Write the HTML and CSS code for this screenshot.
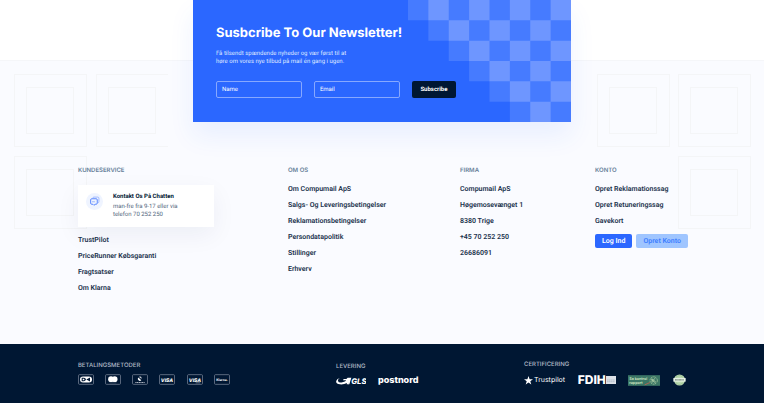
FILE: index.html
```html
<!DOCTYPE html>
<html lang="da">
<head>
<meta charset="utf-8">
<meta name="viewport" content="width=device-width, initial-scale=1">
<title>Compumail</title>
<link rel="stylesheet" href="styles.css">
</head>
<body>
<footer class="footer">
  <svg class="squares squares-left" viewBox="0 0 154 155" aria-hidden="true">
    <g id="square"><rect x=".5" y=".5" width="72" height="72"/><rect x="12.500" y="13.500" width="47" height="46"/></g>
    <use href="#square" x="82"/><use href="#square" y="82"/>
  </svg>
  <svg class="squares squares-right" viewBox="0 0 154 155" aria-hidden="true">
    <use href="#square"/><use href="#square" x="81"/><use href="#square" x="81" y="82"/>
  </svg>

  <section class="newsletter">
    <svg class="checker" viewBox="0 0 8 6" preserveAspectRatio="none" aria-hidden="true">
      <path class="checker-base" d="M0 0H8V6H5V5H4V4H3V3H2V2H1V1H0Z"/>
      <path class="checker-light" d="M1 0h1v1h-1zM3 0h1v1h-1zM5 0h1v1h-1zM7 0h1v1h-1zM2 1h1v1h-1zM4 1h1v1h-1zM6 1h1v1h-1zM3 2h1v1h-1zM5 2h1v1h-1zM7 2h1v1h-1zM4 3h1v1h-1zM6 3h1v1h-1zM5 4h1v1h-1zM7 4h1v1h-1zM6 5h1v1h-1z"/>
    </svg>
    <h2>Susbcribe To Our Newsletter!</h2>
    <p>Få tilsendt spændende nyheder og vær først til at<br>høre om vores nye tilbud på mail én gang i ugen.</p>
    <form class="signup">
      <input type="text" placeholder="Name" aria-label="Name">
      <input type="email" placeholder="Email" aria-label="Email">
      <button type="submit">Subscribe</button>
    </form>
  </section>

  <div class="columns">
    <section>
      <h3>Kundeservice</h3>
      <div class="chat">
        <span class="chat-icon">
          <svg viewBox="0 0 20 20" aria-hidden="true"><path class="bubble-back" d="M7 3.500Q7 2 9 2H16Q18 2 18 4V10Q18 12 16.500 12.500"/><path d="M5 5H13Q15 5 15 7V13Q15 15 13 15H11L9 17L7 15H5Q3 15 3 13V7Q3 5 5 5Z"/><path class="bubble-dots" d="M6 10.500H12"/></svg>
        </span>
        <div><h4>Kontakt Os På Chatten</h4><p>man-fre fra 9-17 eller via<br>telefon 70 252 250</p></div>
      </div>
      <ul>
        <li><a href="#">TrustPilot</a></li>
        <li><a href="#">PriceRunner Købsgaranti</a></li>
        <li><a href="#">Fragtsatser</a></li>
        <li><a href="#">Om Klarna</a></li>
      </ul>
    </section>
    <section>
      <h3>Om os</h3>
      <ul>
        <li><a href="#">Om Compumail ApS</a></li>
        <li><a href="#">Salgs- Og Leveringsbetingelser</a></li>
        <li><a href="#">Reklamationsbetingelser</a></li>
        <li><a href="#">Persondatapolitik</a></li>
        <li><a href="#">Stillinger</a></li>
        <li><a href="#">Erhverv</a></li>
      </ul>
    </section>
    <section>
      <h3>Firma</h3>
      <ul>
        <li>Compumail ApS</li>
        <li>Høgemosevænget 1</li>
        <li>8380 Trige</li>
        <li>+45 70 252 250</li>
        <li>26686091</li>
      </ul>
    </section>
    <section>
      <h3>Konto</h3>
      <ul>
        <li><a href="#">Opret Reklamationssag</a></li>
        <li><a href="#">Opret Retuneringssag</a></li>
        <li><a href="#">Gavekort</a></li>
      </ul>
      <div class="account">
        <button type="button" class="login">Log Ind</button>
        <button type="button" class="create">Opret Konto</button>
      </div>
    </section>
  </div>

  <div class="bottom">
    <section>
      <h3>Betalingsmetoder</h3>
      <div class="payments">
        <svg class="pay" viewBox="0 0 48 32" role="img" aria-label="Dankort"><rect class="frame" x="1.500" y="1.500" width="45" height="29" rx="3"/><rect x="6" y="7" width="36" height="18" rx="9" fill="#fff"/><path class="ink" d="M11 11H18Q23 12 24 16Q23 20 18 21H11ZM25 16L36 10V22Z"/><path d="M14 14h4q3 2 0 4h-4z" fill="#fff"/></svg>
        <svg class="pay" viewBox="0 0 48 32" role="img" aria-label="Mastercard"><rect class="frame" x="1.500" y="1.500" width="45" height="29" rx="3"/><circle cx="18" cy="15" r="8.500" fill="#fff"/><circle cx="29" cy="15" r="8.500" fill="#fff"/><path d="M14 26H34" stroke="#99a3b2" stroke-width="1"/></svg>
        <svg class="pay" viewBox="0 0 48 32" role="img" aria-label="MobilePay"><rect class="frame" x="1.500" y="1.500" width="45" height="29" rx="3"/><path d="M19 10A6 6 0 1 0 28 18L23 14Z" fill="#fff"/><path d="M22 6Q30 7 29 14L23 11Z" fill="#c2c8d0"/><path d="M10 25H38" stroke="#aab2be" stroke-width="3" stroke-dasharray="4 1"/></svg>
        <svg class="pay" viewBox="0 0 48 32" role="img" aria-label="Visa"><rect class="frame" x="1.500" y="1.500" width="45" height="29" rx="3"/><text class="visa" x="24" y="22">VISA</text></svg>
        <svg class="pay" viewBox="0 0 48 32" role="img" aria-label="Visa Electron"><rect class="frame" x="1.500" y="1.500" width="45" height="29" rx="3"/><text class="visa" x="24" y="22">VISA</text><path d="M26 26H40" stroke="#99a3b2" stroke-width="2"/></svg>
        <svg class="pay" viewBox="0 0 48 32" role="img" aria-label="Klarna"><rect class="frame" x="1.500" y="1.500" width="45" height="29" rx="3"/><text class="klarna" x="24" y="20">Klarna.</text></svg>
      </div>
    </section>
    <section>
      <h3>Levering</h3>
      <div class="carriers">
        <svg class="gls" viewBox="0 0 90 27" role="img" aria-label="GLS"><path d="M12 6Q5 9 6 15Q8 21 19 19Q25 18 29 15L30 13H21L23 9H43L37 25H32L33 21Q23 26 12 25Q-2 23 1 14Q3 8 12 6Z" fill="#fff"/><path d="M35 5H46L40 25H36L40 9H31Z" fill="#fff"/><text x="46" y="25">GLS</text></svg>
        <span class="postnord">postnord</span>
      </div>
    </section>
    <section>
      <h3>Certificering</h3>
      <div class="certs">
        <span class="trustpilot"><svg viewBox="0 0 20 20" aria-hidden="true"><path d="M10 0L12.500 7.200H20L14 11.800L16.200 19L10 14.600L3.800 19L6 11.800L0 7.200H7.500Z" fill="#fff"/></svg>Trustpilot</span>
        <span class="fdih">FDIH<svg viewBox="0 0 30 24" aria-hidden="true"><rect width="30" height="24" fill="#dce1e8"/><path d="M3 12H27M3 17H27" stroke="#a5afbd" stroke-width="2" stroke-dasharray="5 1"/></svg></span>
        <svg class="control" viewBox="0 0 96 32" role="img" aria-label="Se kontrol rapport"><rect width="96" height="32" fill="#3b7666"/><text x="4" y="14">Se kontrol</text><text x="4" y="26">rapport</text><path d="M50 29L66 22" stroke="#a96555" stroke-width="3"/><circle cx="77" cy="16" r="11" fill="none" stroke="#b8d8a8" stroke-width="2" stroke-dasharray="5 2"/><path d="M72 10V23M82 9L73 17L83 23M70 12L83 19" fill="none" stroke="#c8e2b5" stroke-width="2"/></svg>
        <svg class="seal" viewBox="0 0 40 36" role="img" aria-label="E-mærket"><circle cx="20" cy="18" r="17" fill="#b9d9ae"/><path d="M10 9Q20 0 30 9M10 27Q20 36 30 27" fill="none" stroke="#7da97e" stroke-width="2" stroke-dasharray="3 1"/><path d="M1 12H39V23H1Z" fill="#e8f2e7"/><path d="M6 17.500H34" stroke="#68806f" stroke-width="4" stroke-dasharray="3 1"/></svg>
      </div>
    </section>
  </div>
</footer>
</body>
</html>
```
FILE: styles.css
```css
* { box-sizing: border-box; }
body { margin: 0; background: #fff; color: #1b324d; font-family: Roboto, "Liberation Sans", sans-serif; font-size: 6px; text-rendering: geometricPrecision; }
h2, h3, h4, p, ul { margin: 0; padding: 0; }
ul { list-style: none; }
a { color: inherit; text-decoration: none; }
button, input { font: inherit; margin: 0; text-rendering: inherit; }
h2, h3, .bottom { font-family: Inter, "Liberation Sans", sans-serif; }

.footer { position: relative; display: flex; flex-direction: column; min-height: calc(100vh - 60px); margin-top: 60px; background: #fafbff; border-top: 1px solid #f5f6f9; }
.squares { position: absolute; top: 13px; width: 154px; height: 155px; fill: none; stroke: #f4f5f7; }
.squares-left { left: 14px; }
.squares-right { right: 13px; }

.newsletter { position: relative; width: 49.5%; margin: -61px auto 0; padding: 25px 23px 24px; background: #2b67ff; color: #fff; box-shadow: 0 14px 24px rgba(43, 103, 255, .08); }
.newsletter > :not(.checker) { position: relative; }
.checker { position: absolute; top: 0; right: 0; width: 163px; height: 100%; }
.checker-base { fill: #467bff; }
.checker-light { fill: #6e96ff; }
.newsletter h2 { font-size: 13px; line-height: 17px; font-weight: 700; }
.newsletter p { margin-top: 8px; line-height: 8px; color: #dfe8ff; }
.signup { display: flex; gap: 12px; margin-top: 15px; }
.signup input { width: 86px; height: 17px; padding: 0 5px; border: 1px solid #87a8ff; border-radius: 2px; background: transparent; color: #fff; }
.signup input::placeholder { color: #fff; opacity: 1; }
.signup button { width: 44px; padding: 0; border: 0; border-radius: 2px; background: #001733; color: #fff; font-weight: 700; }

.columns { position: relative; display: grid; grid-template-columns: minmax(0, 210fr) minmax(0, 172fr) minmax(0, 135fr) minmax(0, 91fr); padding: 45px 10.2% 48px; }
h3 { font-size: 6px; line-height: 8px; font-weight: 600; text-transform: uppercase; color: #667e98; }
.columns ul { margin-top: 6px; font-size: 7px; font-weight: 600; }
.columns li { line-height: 16px; white-space: nowrap; }
.chat { display: flex; gap: 10px; width: 136px; margin-top: 10px; padding: 8px; background: #fff; box-shadow: 0 8px 24px rgba(20, 40, 80, .06); }
.columns .chat + ul { margin-top: 5px; }
.chat-icon { display: grid; place-items: center; width: 17px; height: 17px; border-radius: 50%; background: #eff4ff; }
.chat-icon svg { width: 11px; height: 11px; fill: none; stroke: #3b71ff; stroke-width: 1.5; }
.chat-icon .bubble-back { stroke: #91afff; }
.chat-icon .bubble-dots { stroke-dasharray: 1 1; }
.chat h4 { font-size: 6px; line-height: 8px; font-weight: 700; color: #001733; }
.chat p { margin-top: 2px; line-height: 8px; color: #53677e; }
.account { display: flex; gap: 4px; margin-top: 5px; }
.account button { height: 14px; padding: 0 7px; border: 0; border-radius: 2px; font-size: 7px; font-weight: 600; white-space: nowrap; }
.account .login { background: #2b67ff; color: #fff; }
.account .create { background: #9fc5ff; color: #3d7eff; }

.bottom { position: relative; display: grid; grid-template-columns: 258fr 188fr 162fr; align-items: center; flex: 1; padding: 0 10.2%; background: #001733; color: #fff; }
.bottom h3 { font-weight: 500; color: #b2bbc7; }
.payments { display: flex; justify-content: space-between; width: 152px; margin-top: 4px; }
.pay { width: 16px; height: 11px; }
.frame { fill: none; stroke: #8590a1; stroke-width: 2; }
.ink { fill: #001733; }
.visa { fill: #fff; font-size: 15px; font-weight: 800; font-style: italic; text-anchor: middle; }
.klarna { fill: #fff; font-size: 10px; font-weight: 700; text-anchor: middle; }
.carriers { display: flex; align-items: center; gap: 12px; margin-top: 5px; }
.gls { width: 30px; height: 9px; }
.gls text { fill: #fff; font-size: 23px; font-weight: 800; font-style: italic; }
.postnord { font-size: 9px; line-height: 9px; font-weight: 800; }
.certs { display: flex; align-items: center; justify-content: space-between; height: 12px; margin-top: 5px; }
.trustpilot { display: flex; align-items: center; gap: 1px; font-size: 7px; line-height: 10px; }
.trustpilot svg { width: 9px; height: 9px; }
.fdih { display: flex; align-items: center; font-size: 12px; line-height: 10px; font-weight: 800; }
.fdih svg { width: 10px; height: 8px; }
.control { width: 32px; height: 11px; }
.control text { fill: #d5ebc5; font-size: 11px; font-weight: 600; }
.seal { width: 13px; height: 12px; }
```
